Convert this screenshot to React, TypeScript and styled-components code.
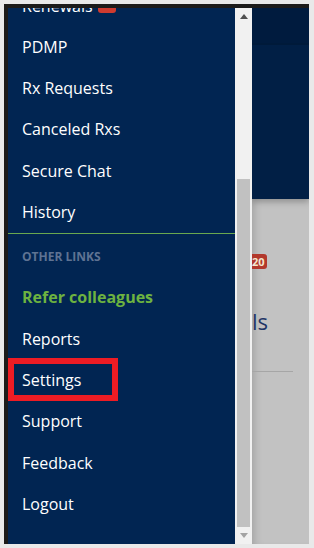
import styled, { createGlobalStyle } from 'styled-components';

const GlobalStyle = createGlobalStyle`
    html, body {
        margin: 0;
        padding: 0;
        background: #e9e9e9;
        font-family: 'Open Sans', 'Liberation Sans', sans-serif;
    }
`;

const mainLinks = ['PDMP', 'Rx Requests', 'Canceled Rxs', 'Secure Chat', 'History'];
const otherLinks = ['Reports', 'Settings', 'Support', 'Feedback', 'Logout'];

export default function App() {
    return (
        <>
            <GlobalStyle />
            <Frame>
                <Drawer>
                    <MenuList>
                        <MenuItem>
                            Renewals
                            <Badge />
                        </MenuItem>
                        {mainLinks.map((label) => (
                            <MenuItem key={label}>{label}</MenuItem>
                        ))}
                        <Divider />
                        <SectionTitle>Other Links</SectionTitle>
                        <MenuItem $accent>Refer colleagues</MenuItem>
                        {otherLinks.map((label) => (
                            <MenuItem key={label} $highlighted={label === 'Settings'}>
                                {label}
                            </MenuItem>
                        ))}
                    </MenuList>
                </Drawer>
                <Scrollbar>
                    <ArrowButton>
                        <svg width="8" height="5" viewBox="0 0 8 5">
                            <path d="M0 5 L4 0 L8 5 Z" fill="#505050" />
                        </svg>
                    </ArrowButton>
                    <Track>
                        <Thumb />
                    </Track>
                    <ArrowButton>
                        <svg width="8" height="5" viewBox="0 0 8 5">
                            <path d="M0 0 L8 0 L4 5 Z" fill="#a3a3a3" />
                        </svg>
                    </ArrowButton>
                </Scrollbar>
                <Backdrop>
                    <PageHeader>
                        <HeaderBar />
                    </PageHeader>
                    <PageBody>
                        <CountBadge>20</CountBadge>
                        <PageTitle>ls</PageTitle>
                        <Rule />
                    </PageBody>
                </Backdrop>
            </Frame>
        </>
    );
}

const Frame = styled.div`
    display: flex;
    width: 301px;
    height: 536px;
    margin: 4px 0 0 4px;
    padding: 4px 0 0 4px;
    background: #1c1b1a;
`;

const Drawer = styled.nav`
    width: 227px;
    flex-shrink: 0;
    overflow: hidden;
    background: #012552;
`;

const MenuList = styled.div`
    display: flex;
    flex-direction: column;
    margin-top: -22.5px;
`;

const MenuItem = styled.div<{ $accent?: boolean; $highlighted?: boolean }>`
    position: relative;
    padding: 10px 14px;
    font-size: 16px;
    line-height: 21.33px;
    font-weight: ${(p) => (p.$accent ? 700 : 400)};
    color: ${(p) => (p.$accent ? '#6db340' : '#ffffff')};
    white-space: nowrap;

    ${(p) =>
        p.$highlighted &&
        `
        &::after {
            content: '';
            position: absolute;
            left: 0;
            top: -2px;
            width: 110px;
            height: 43px;
            box-sizing: border-box;
            border: 6px solid #ed1c24;
        }
    `}
`;

const Badge = styled.span`
    display: inline-block;
    width: 18px;
    height: 16px;
    margin-left: 5px;
    vertical-align: -1px;
    border-radius: 3px;
    background: #cf3b2f;
`;

const Divider = styled.div`
    height: 1px;
    background: #6aa84f;
`;

const SectionTitle = styled.div`
    padding: 15px 14px 12px;
    font-size: 12px;
    line-height: 16px;
    font-weight: 700;
    text-transform: uppercase;
    color: #5f7393;
`;

const Scrollbar = styled.div`
    display: flex;
    flex-direction: column;
    width: 17px;
    flex-shrink: 0;
    background: #f1f1f1;
`;

const ArrowButton = styled.div`
    display: flex;
    align-items: center;
    justify-content: center;
    height: 17px;
`;

const Track = styled.div`
    flex: 1;
    display: flex;
    flex-direction: column;
    justify-content: flex-end;
    padding: 0 2px;
`;

const Thumb = styled.div`
    height: 348px;
    background: #c1c1c1;
`;

const Backdrop = styled.div`
    flex: 1;
    display: flex;
    flex-direction: column;
    overflow: hidden;
    background: #c2c2c2;
    box-shadow: inset 8px 0 8px -6px rgba(0, 0, 0, 0.18);
`;

const PageHeader = styled.div`
    height: 191px;
    flex-shrink: 0;
    background: #011f45;
    box-shadow: 0 3px 6px rgba(0, 0, 0, 0.25);
    position: relative;
`;

const HeaderBar = styled.div`
    height: 35px;
    background: #001b3e;
    border-bottom: 2px solid #001a3a;
`;

const PageBody = styled.div`
    display: flex;
    flex-direction: column;
    align-items: flex-start;
    padding-top: 55px;
`;

const CountBadge = styled.div`
    margin-left: -6px;
    padding: 0 2px 0 6px;
    height: 15px;
    line-height: 15px;
    font-size: 11px;
    font-weight: 700;
    color: #f3e6d0;
    background: #b2382c;
    border-radius: 3px;
`;

const PageTitle = styled.div`
    margin-top: 37px;
    font-size: 22px;
    line-height: 30px;
    color: #1f3566;
`;

const Rule = styled.div`
    margin-top: 35px;
    width: 41px;
    height: 1px;
    background: #a6a6a6;
`;
